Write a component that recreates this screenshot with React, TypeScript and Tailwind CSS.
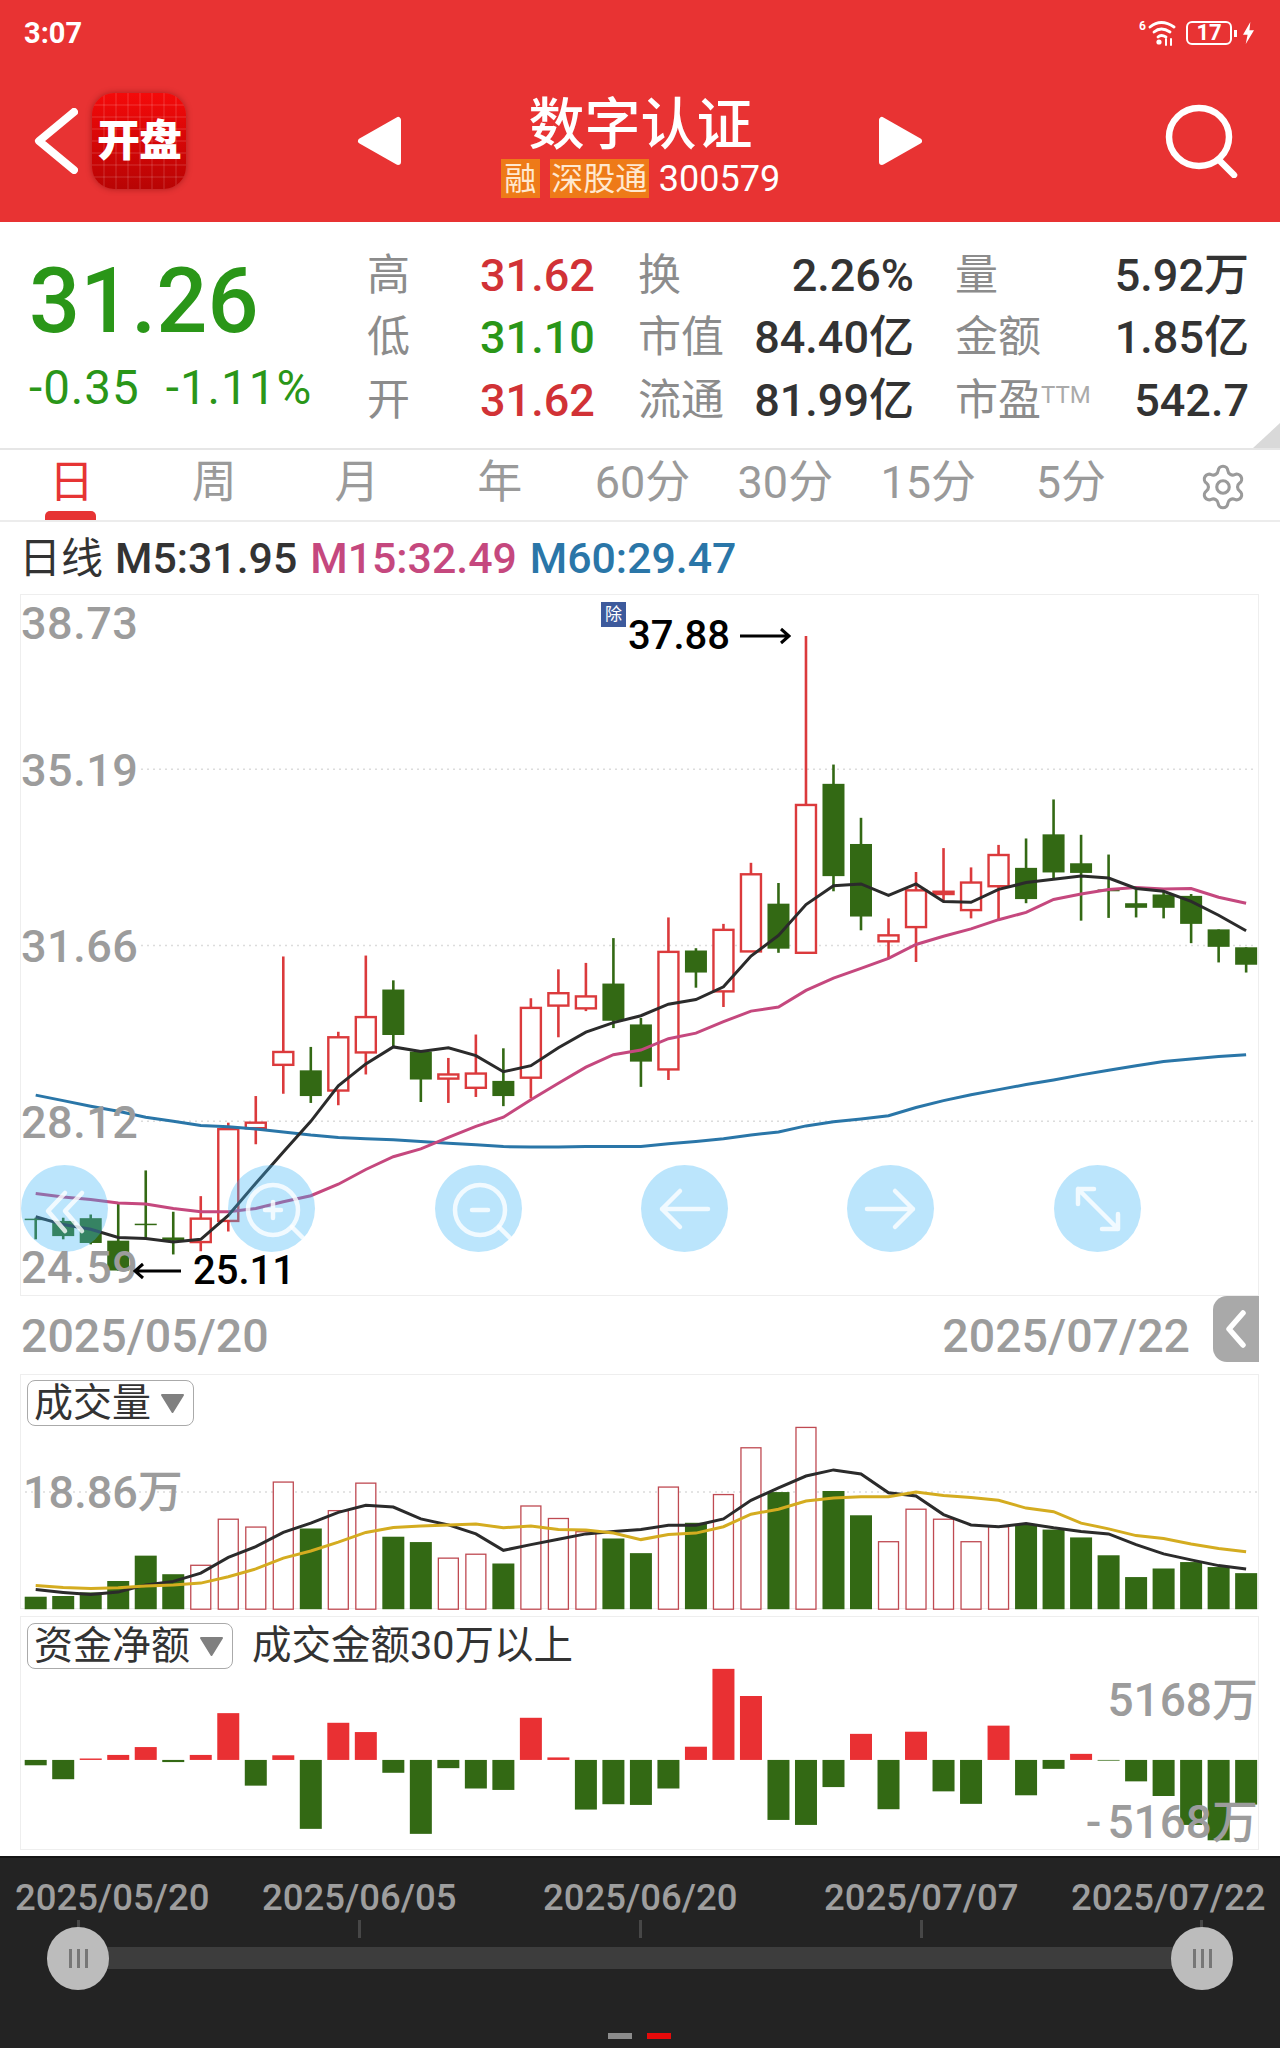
import React from "react";
import { Settings } from "lucide-react";

const RED = "#db3a3c";
const GREEN = "#336914";

const cx = (i: number) => 34.7 + 27.51 * i;
const py = (z: number) => 590 + z / 2.178; // price panel
const vy = (z: number) => 1300 + z / 2.8; // lower panels

type Candle = [number, number, number, number, "g" | "r"];

const candles: Candle[] = [
  [1365, 1412, 1367, 1370, "g"], [1365, 1412, 1372, 1405, "g"], [1358, 1423, 1366, 1420, "g"],
  [1335, 1480, 1415, 1480, "g"], [1262, 1412, 1378, 1380, "g"], [1352, 1445, 1408, 1415, "g"],
  [1318, 1438, 1367, 1418, "r"], [1158, 1395, 1172, 1372, "r"], [1100, 1205, 1158, 1170, "r"],
  [796, 1095, 1004, 1032, "r"], [993, 1115, 1044, 1100, "g"], [960, 1120, 972, 1088, "r"],
  [794, 1053, 928, 1005, "r"], [848, 995, 868, 967, "g"], [1000, 1113, 1003, 1064, "g"],
  [1017, 1115, 1053, 1062, "r"], [966, 1102, 1051, 1082, "r"], [996, 1122, 1067, 1100, "g"],
  [887, 1105, 908, 1060, "r"], [824, 972, 876, 903, "r"], [810, 915, 883, 909, "r"],
  [756, 952, 855, 936, "g"], [930, 1080, 944, 1025, "g"], [711, 1065, 786, 1042, "r"],
  [778, 864, 783, 831, "g"], [725, 906, 738, 872, "r"], [592, 785, 617, 785, "r"],
  [636, 788, 681, 779, "g"], [98, 788, 466, 788, "r"], [378, 654, 420, 621, "g"],
  [494, 739, 551, 709, "g"], [713, 800, 750, 763, "r"], [612, 808, 652, 732, "r"],
  [560, 678, 655, 660, "r"], [602, 713, 635, 695, "r"], [553, 716, 575, 643, "r"],
  [539, 680, 603, 671, "g"], [454, 628, 530, 613, "g"], [531, 718, 593, 614, "g"],
  [574, 712, 650, 654, "g"], [650, 711, 680, 690, "g"], [655, 713, 661, 690, "g"],
  [660, 767, 664, 725, "g"], [737, 809, 737, 775, "g"], [776, 831, 776, 814, "g"],
];

const m5 = [1363, 1380, 1390, 1408, 1410, 1418, 1412, 1360, 1290, 1222, 1155, 1078, 1030, 993, 1003, 995, 1012, 1047, 1034, 995, 961, 940, 925, 900, 890, 862, 795, 750, 683, 642, 638, 663, 638, 676, 678, 650, 635, 628, 621, 625, 648, 654, 676, 706, 740];
const m15 = [1312, 1320, 1325, 1333, 1335, 1345, 1352, 1352, 1345, 1330, 1317, 1292, 1260, 1232, 1215, 1190, 1166, 1146, 1108, 1072, 1037, 1010, 1000, 975, 963, 938, 915, 906, 870, 843, 822, 800, 770, 752, 736, 716, 700, 672, 660, 650, 646, 649, 648, 667, 680];
const m60 = [1098, 1110, 1122, 1133, 1146, 1155, 1164, 1167, 1172, 1178, 1185, 1190, 1193, 1195, 1199, 1203, 1206, 1210, 1211, 1211, 1210, 1210, 1210, 1204, 1199, 1193, 1185, 1178, 1165, 1156, 1150, 1143, 1125, 1110, 1097, 1086, 1075, 1065, 1054, 1044, 1034, 1025, 1019, 1014, 1010];

const volumes: [number, "g" | "r"][] = [
  [828, "g"], [826, "g"], [816, "g"], [784, "g"], [713, "g"], [765, "g"], [740, "r"], [611, "r"], [633, "r"],
  [507, "r"], [637, "g"], [587, "r"], [510, "r"], [660, "g"], [675, "g"], [720, "r"], [709, "r"], [735, "g"],
  [574, "r"], [609, "r"], [646, "r"], [665, "g"], [706, "g"], [521, "r"], [621, "g"], [542, "r"], [411, "r"],
  [535, "g"], [354, "r"], [532, "g"], [600, "g"], [674, "r"], [583, "r"], [611, "r"], [674, "r"], [632, "r"],
  [625, "g"], [640, "g"], [662, "g"], [712, "g"], [773, "g"], [749, "g"], [731, "g"], [745, "g"], [762, "g"],
];
const volBlack = [808, 816, 822, 815, 795, 785, 762, 718, 688, 648, 622, 592, 572, 577, 610, 627, 652, 698, 682, 667, 652, 645, 640, 628, 628, 610, 558, 523, 490, 473, 484, 537, 546, 598, 627, 632, 623, 635, 645, 652, 682, 708, 725, 741, 750];
const volYellow = [797, 802, 805, 803, 798, 795, 790, 772, 750, 720, 700, 675, 648, 634, 630, 627, 624, 635, 630, 640, 641, 650, 668, 654, 650, 632, 597, 583, 560, 552, 548, 548, 535, 545, 550, 558, 580, 590, 622, 638, 657, 665, 680, 693, 702];

const funds = [1300, 1339, 1281, 1271, 1249, 1291, 1271, 1154, 1357, 1272, 1478, 1181, 1207, 1321, 1492, 1308, 1365, 1369, 1167, 1278, 1424, 1409, 1411, 1365, 1248, 1030, 1106, 1453, 1467, 1361, 1212, 1423, 1206, 1373, 1408, 1189, 1384, 1310, 1268, 1287, 1345, 1386, 1467, 1510, 1410];

const line = (vals: number[], map: (z: number) => number) =>
  vals.map((v, i) => `${cx(i).toFixed(1)},${map(v).toFixed(1)}`).join(" ");

function PriceChart() {
  return (
    <svg className="absolute inset-0" width="1239" height="702" viewBox="20 594 1239 702">
      {[py(388), py(772), py(1155)].map((y) => (
        <line key={y} x1="140" x2="1255" y1={y} y2={y} stroke="#dcdcdc" strokeWidth="1.5" strokeDasharray="2 4" />
      ))}
      {candles.map(([hi, lo, top, bot, c], i) => {
        const x = cx(i);
        const color = c === "g" ? GREEN : RED;
        const thin = bot - top < 8;
        return (
          <g key={i}>
            <line x1={x} x2={x} y1={py(hi)} y2={py(lo)} stroke={color} strokeWidth="2.6" />
            {c === "g" ? (
              <rect x={x - 11} y={py(top)} width="22" height={Math.max(py(bot) - py(top), 1.5)} fill={color} />
            ) : (
              <rect x={x - 10} y={py(top)} width="20" height={py(bot) - py(top)} fill={thin ? color : "#fff"} stroke={color} strokeWidth="2.4" />
            )}
          </g>
        );
      })}
      <polyline points={line(m60, py)} fill="none" stroke="#2a76a8" strokeWidth="3" />
      <polyline points={line(m15, py)} fill="none" stroke="#c5487e" strokeWidth="3" />
      <polyline points={line(m5, py)} fill="none" stroke="#2b2b2b" strokeWidth="3" />
    </svg>
  );
}

function VolumeChart() {
  const base = vy(863);
  return (
    <svg className="absolute inset-0" width="1239" height="235" viewBox="20 1374 1239 235">
      <line x1="24" x2="1256" y1={vy(535)} y2={vy(535)} stroke="#dcdcdc" strokeWidth="1.5" strokeDasharray="2 4" />
      {volumes.map(([top, c], i) =>
        c === "g" ? (
          <rect key={i} x={cx(i) - 11} y={vy(top)} width="22" height={base - vy(top)} fill={GREEN} />
        ) : (
          <rect key={i} x={cx(i) - 10} y={vy(top)} width="20" height={base - vy(top)} fill="#fff" stroke="#bf4a52" strokeWidth="1.3" />
        )
      )}
      <polyline points={line(volBlack, vy)} fill="none" stroke="#2b2b2b" strokeWidth="3" />
      <polyline points={line(volYellow, vy)} fill="none" stroke="#d4ac20" strokeWidth="3" />
    </svg>
  );
}

function FundsChart() {
  const zero = vy(1285);
  return (
    <svg className="absolute inset-0" width="1239" height="234" viewBox="20 1616 1239 234">
      {funds.map((v, i) => {
        const y = vy(v);
        return v < 1285 ? (
          <rect key={i} x={cx(i) - 11} y={y} width="22" height={zero - y} fill="#e93033" />
        ) : (
          <rect key={i} x={cx(i) - 11} y={zero} width="22" height={y - zero} fill={GREEN} />
        );
      })}
    </svg>
  );
}

function ChartButton({ children, left }: { children: React.ReactNode; left: string }) {
  return (
    <div className={`absolute top-[570px] h-[87px] w-[87px] rounded-full bg-[#3cb4f5]/35 ${left}`}>
      <svg width="87" height="87" viewBox="0 0 87 87" fill="none" stroke="#fff" strokeOpacity="0.8" strokeWidth="4.5" strokeLinecap="round" strokeLinejoin="round">
        {children}
      </svg>
    </div>
  );
}

function Chip({ label }: { label: string }) {
  return (
    <div className="flex h-[46px] items-center gap-[9px] rounded-[8px] border border-[#aaaaaa] bg-white pl-[6px] pr-[8px] text-[39px] leading-none text-[#333]">
      <span className="whitespace-nowrap">{label}</span>
      <svg width="25" height="21" viewBox="0 0 25 21">
        <path d="M2 2 H23 L12.5 19 Z" fill="#808080" stroke="#808080" strokeWidth="2" strokeLinejoin="round" />
      </svg>
    </div>
  );
}

function Handle({ left }: { left: string }) {
  return (
    <div className={`absolute top-[1927px] flex h-[63px] w-[62px] items-center justify-center gap-[5px] rounded-full bg-[#bcbcbc] ${left}`}>
      <span className="h-[19px] w-[3px] bg-[#777]" />
      <span className="h-[19px] w-[3px] bg-[#777]" />
      <span className="h-[19px] w-[3px] bg-[#777]" />
    </div>
  );
}

const quoteRows = [
  { l1: "高", v1: "31.62", c1: "text-[#d13236]", l2: "换", v2: "2.26%", l3: "量", v3: "5.92万" },
  { l1: "低", v1: "31.10", c1: "text-[#2a9618]", l2: "市值", v2: "84.40亿", l3: "金额", v3: "1.85亿" },
  { l1: "开", v1: "31.62", c1: "text-[#d13236]", l2: "流通", v2: "81.99亿", l3: "市盈", v3: "542.7", ttm: true },
];

const tabs = ["日", "周", "月", "年", "60分", "30分", "15分", "5分"];
const axisDates = [
  { t: "2025/05/20", c: "left-[15px]" },
  { t: "2025/06/05", c: "left-[262px]" },
  { t: "2025/06/20", c: "left-[543px]" },
  { t: "2025/07/07", c: "left-[824px]" },
  { t: "2025/07/22", c: "left-[1071px]" },
];
const ticks = ["left-[77px]", "left-[358px]", "left-[639px]", "left-[920px]", "left-[1200px]"];

export default function App() {
  return (
    <div className="relative h-[2048px] w-[1280px] overflow-hidden bg-white font-[family-name:Roboto,'Noto_Sans_CJK_SC',sans-serif]">
      {/* red header */}
      <header className="h-[222px] bg-[#e83333] text-white">
        <div className="flex h-[60px] items-center justify-between pl-6 pr-[25px] pt-[6px]">
          <span className="text-[29px] font-bold leading-none">3:07</span>
          <div className="flex items-center">
            <span className="-mt-[14px] mr-[1px] text-[12px] font-bold leading-none">6</span>
            <svg width="30" height="26" viewBox="0 0 30 26" fill="none" stroke="#fff" strokeWidth="2.8" strokeLinecap="round">
              <path d="M3 7 Q14 -2 27 7" />
              <path d="M7 12 Q14 6 23 12" />
              <path d="M11 17 Q14 14 19 17" />
              <circle cx="12" cy="22" r="2.6" fill="#fff" stroke="none" />
              <path d="M19 19 V25 M24 19 V25" strokeWidth="2" />
            </svg>
            <div className="ml-[9px] flex h-[24px] w-[46px] items-center justify-center rounded-[6px] border-2 border-white text-[22px] font-bold leading-none">17</div>
            <span className="ml-[2px] h-[7px] w-[3px] bg-white" />
            <svg width="13" height="22" viewBox="0 0 14 24" className="ml-[5px]">
              <path d="M9 0 L1 14 H6 L4 24 L13 9 H8 Z" fill="#fff" />
            </svg>
          </div>
        </div>
        <div className="flex h-[162px] items-center pl-[34px]">
          <svg width="44" height="66" viewBox="0 0 44 66" fill="none" stroke="#fff" strokeWidth="8" strokeLinecap="round" strokeLinejoin="round">
            <path d="M40 4 L5 33 L40 62" />
          </svg>
          <div className="relative ml-[14px] flex h-[96px] w-[94px] items-center justify-center overflow-hidden rounded-[22px] bg-gradient-to-b from-[#f50a0a] to-[#b80404] shadow-[0_0_6px_rgba(90,0,0,0.45)]">
            <svg className="absolute inset-0" width="94" height="96" viewBox="0 0 94 96" stroke="#fff" strokeOpacity="0.18" strokeWidth="1">
              {[12, 24, 36, 48, 60, 72, 84].map((p) => (
                <g key={p}>
                  <line x1={p} x2={p} y1="0" y2="96" />
                  <line x1="0" x2="94" y1={p} y2={p} />
                </g>
              ))}
            </svg>
            <span className="relative whitespace-nowrap text-[43px] font-black leading-none tracking-[-1px]">开盘</span>
          </div>
          <svg width="45" height="50" viewBox="0 0 45 50" className="ml-[171px]">
            <path d="M41 4 V46 L4 25 Z" fill="#fff" stroke="#fff" strokeWidth="6" strokeLinejoin="round" />
          </svg>
          <div className="flex w-[477px] flex-col items-center gap-[7px] pt-[14px]">
            <h1 className="whitespace-nowrap text-[56px] font-medium leading-[54px]">数字认证</h1>
            <div className="flex h-[39px] items-center text-[32px] leading-none">
              <span className="flex h-[39px] w-[39px] items-center justify-center bg-[#ee7a18] text-[#ffe8cf]">融</span>
              <span className="ml-[10px] flex h-[39px] w-[99px] items-center justify-center whitespace-nowrap bg-[#ee7a18] text-[#ffe8cf]">深股通</span>
              <span className="ml-[10px] text-[36px]">300579</span>
            </div>
          </div>
          <svg width="43" height="50" viewBox="0 0 43 50">
            <path d="M3 4 V46 L40 25 Z" fill="#fff" stroke="#fff" strokeWidth="6" strokeLinejoin="round" />
          </svg>
          <svg width="74" height="74" viewBox="0 0 74 74" fill="none" stroke="#fff" strokeWidth="6.5" strokeLinecap="round" className="ml-[242px]">
            <ellipse cx="35" cy="33" rx="30" ry="29" />
            <path d="M55 56 L70 71" />
          </svg>
        </div>
      </header>

      {/* quote block */}
      <section className="relative flex h-[228px] border-b-2 border-[#e6e6e6] pt-[24px]">
        <div className="w-[367px] pl-[29px]">
          <div className="mt-[10px] text-[90px] font-medium leading-[92px] text-[#2a9618]">31.26</div>
          <div className="mt-[14px] flex gap-[26px] text-[47.5px] leading-[52px] tracking-[1px] text-[#2a9618]">
            <span>-0.35</span>
            <span>-1.11%</span>
          </div>
        </div>
        <div className="-mt-[2px] grid h-[188px] grid-cols-[113px_158px_108px_209px_143px_151px] grid-rows-3 items-center text-[45px] font-medium leading-none">
          {quoteRows.map((r) => (
            <React.Fragment key={r.l1}>
              <span className="text-[43px] font-normal text-[#8c8c8c]">{r.l1}</span>
              <span className={r.c1}>{r.v1}</span>
              <span className="whitespace-nowrap text-[43px] font-normal text-[#8c8c8c]">{r.l2}</span>
              <span className="whitespace-nowrap pr-[41px] text-right text-[#333]">{r.v2}</span>
              <span className="whitespace-nowrap text-[43px] font-normal text-[#8c8c8c]">
                {r.l3}
                {r.ttm && <sup className="text-[24px] text-[#aaa]">TTM</sup>}
              </span>
              <span className="whitespace-nowrap text-right text-[#333]">{r.v3}</span>
            </React.Fragment>
          ))}
        </div>
        <svg className="absolute bottom-0 right-0" width="27" height="25" viewBox="0 0 27 25">
          <path d="M27 0 V25 H0 Z" fill="#d9d9d9" />
        </svg>
      </section>

      {/* period tabs */}
      <nav className="flex h-[72px] items-center border-b-2 border-[#ececec]">
        {tabs.map((t, i) => (
          <div key={t} className={`relative flex h-full w-[142.8px] items-center justify-center pb-[6px] text-[45px] leading-none ${i === 0 ? "text-[#e63434]" : "text-[#9a9a9a]"}`}>
            {t}
            {i === 0 && <span className="absolute bottom-0 left-[45px] h-[9px] w-[51px] rounded-t-[5px] bg-[#e63434]" />}
          </div>
        ))}
        <Settings className="ml-[56px] mt-[4px] text-[#9a9a9a]" size={50} strokeWidth={1.5} />
      </nav>

      {/* MA legend */}
      <div className="flex h-[72px] items-center gap-[13px] pl-[19px] text-[42.8px] font-medium leading-none">
        <span className="text-[#333]">
          <span className="mr-[12px] text-[42px] font-normal">日线</span>M5:31.95
        </span>
        <span className="text-[#c5487e]">M15:32.49</span>
        <span className="text-[#2a76a8]">M60:29.47</span>
      </div>

      {/* price panel */}
      <div className="relative ml-[20px] h-[702px] w-[1239px] border border-[#eeeeee]">
        <PriceChart />
        <ChartButton left="left-[0px]">
          <path d="M44 28 L27 46 L44 66 M61 28 L44 46 L61 66" />
        </ChartButton>
        <ChartButton left="left-[207px]">
          <circle cx="45" cy="45" r="25" />
          <path d="M64 62 L75 73 M45 37 V53 M37 45 H53" />
        </ChartButton>
        <ChartButton left="left-[414px]">
          <circle cx="45" cy="45" r="25" />
          <path d="M64 62 L75 73 M37 45 H53" />
        </ChartButton>
        <ChartButton left="left-[620px]">
          <path d="M67 44 H21 M39 26 L21 44 L39 62" />
        </ChartButton>
        <ChartButton left="left-[826px]">
          <path d="M20 44 H66 M48 26 L66 44 L48 62" />
        </ChartButton>
        <ChartButton left="left-[1033px]">
          <path d="M24 24 L64 64 M24 39 V24 H40 M64 49 V64 H48" />
        </ChartButton>

        {[
          { t: "38.73", c: "top-[6px]" },
          { t: "35.19", c: "top-[153px]" },
          { t: "31.66", c: "top-[329px]" },
          { t: "28.12", c: "top-[505px]" },
          { t: "24.59", c: "top-[650px]" },
        ].map((l) => (
          <span key={l.t} className={`absolute left-0 text-[45px] font-medium leading-none tracking-[0.5px] text-[#9c9c9c] ${l.c}`}>
            {l.t}
          </span>
        ))}

        <span className="absolute left-[580px] top-[7px] flex h-[25px] w-[25px] items-center justify-center bg-[#3d5a9c] text-[17px] leading-none text-white">除</span>
        <div className="absolute left-[607px] top-[21px] flex items-center gap-[10px] text-[40px] font-medium leading-none text-black">
          37.88
          <svg width="51" height="20" viewBox="0 0 51 20" fill="none" stroke="#000" strokeWidth="3">
            <path d="M0 10 H49 M41 3 L49 10 L41 17" />
          </svg>
        </div>
        <div className="absolute left-[112px] top-[656px] flex items-center gap-[12px] text-[40px] font-medium leading-none text-black">
          <svg width="48" height="20" viewBox="0 0 48 20" fill="none" stroke="#000" strokeWidth="3">
            <path d="M48 10 H2 M10 3 L2 10 L10 17" />
          </svg>
          25.11
        </div>
      </div>

      {/* date range */}
      <div className="relative flex h-[78px] items-center justify-between pl-[21px] pr-[90px] pt-[2px] text-[46.5px] font-medium leading-none text-[#9c9c9c]">
        <span>2025/05/20</span>
        <span>2025/07/22</span>
        <div className="absolute left-[1213px] top-0 flex h-[66px] w-[46px] items-center justify-center rounded-l-[14px] bg-[#a9a9a9]">
          <svg width="22" height="38" viewBox="0 0 22 38" fill="none" stroke="#fff" strokeWidth="5.5" strokeLinecap="round" strokeLinejoin="round">
            <path d="M18 3 L4 19 L18 35" />
          </svg>
        </div>
      </div>

      {/* volume panel */}
      <div className="relative ml-[20px] h-[235px] w-[1239px] border border-[#eeeeee]">
        <VolumeChart />
        <div className="absolute left-[6px] top-[5px]">
          <Chip label="成交量" />
        </div>
        <span className="absolute left-[2px] top-[95px] text-[45px] font-medium leading-none text-[#9c9c9c]">18.86万</span>
      </div>

      {/* funds panel */}
      <div className="relative ml-[20px] mt-[7px] h-[234px] w-[1239px] border border-[#eeeeee]">
        <FundsChart />
        <div className="absolute left-[6px] top-[6px] flex items-center">
          <Chip label="资金净额" />
          <span className="ml-[19px] whitespace-nowrap text-[39.5px] leading-none text-[#333]">成交金额30万以上</span>
        </div>
        <span className="absolute right-0 top-[60px] text-[46px] font-medium leading-none text-[#9c9c9c]">5168万</span>
        <span className="absolute right-0 top-[182px] text-[46px] font-medium leading-none text-[#9c9c9c]">
          <span className="pr-[6px]">-</span>5168万
        </span>
      </div>

      {/* range slider */}
      <footer className="absolute inset-x-0 top-[1856px] h-[192px] border-t-2 border-[#151515] bg-[#232323]">
        {axisDates.map((d) => (
          <span key={d.t} className={`absolute top-[22px] text-[36.5px] font-medium leading-none text-[#9e9e9e] ${d.c}`}>{d.t}</span>
        ))}
        {ticks.map((t) => (
          <span key={t} className={`absolute top-[62px] h-[18px] w-[3px] bg-[#474747] ${t}`} />
        ))}
        <div className="absolute left-[78px] top-[89px] h-[22px] w-[1124px] bg-[#3d3d3d]" />
        <div className="absolute left-[608px] top-[175px] flex gap-[15px]">
          <span className="h-[6px] w-[24px] bg-[#8c8c8c]" />
          <span className="h-[6px] w-[24px] bg-[#e60a0a]" />
        </div>
      </footer>
      <Handle left="left-[47px]" />
      <Handle left="left-[1171px]" />
    </div>
  );
}
